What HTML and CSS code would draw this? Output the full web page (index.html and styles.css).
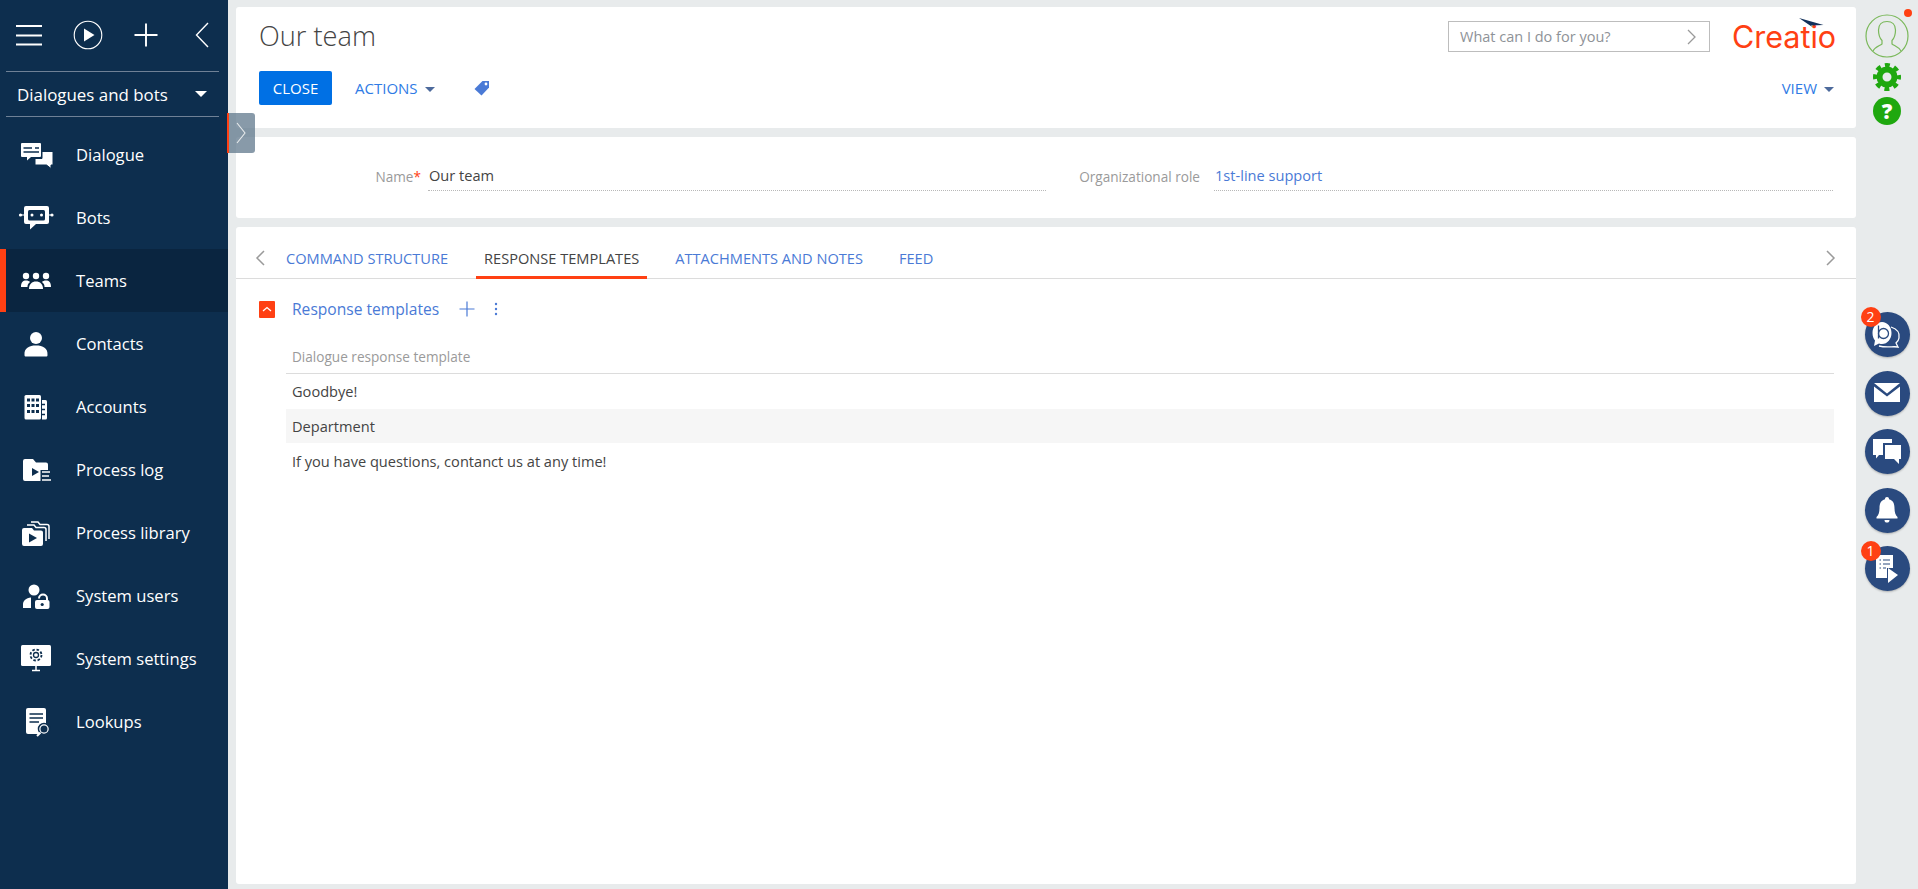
FILE: index.html
```html
<!DOCTYPE html>
<html lang="en">
<head>
<meta charset="utf-8">
<title>Our team</title>
<link rel="stylesheet" href="styles.css">
</head>
<body>
<div class="app">
  <aside class="sidebar">
    <div class="tools">
      <svg class="tool" width="26" height="24" viewBox="0 0 26 24"><path d="M0 3H26M0 12.500H26M0 21.500H26" stroke="#fff" stroke-width="1.800"/></svg>
      <svg class="tool" width="30" height="30" viewBox="0 0 30 30"><circle cx="15" cy="15" r="13.800" fill="none" stroke="#fff" stroke-width="1.100"/><path d="M11 8.500L21.500 15L11 21.500Z" fill="#fff"/></svg>
      <svg class="tool" width="24" height="24" viewBox="0 0 24 24"><path d="M0.500 12H23.500M12 0.500V23.500" stroke="#fff" stroke-width="1.900"/></svg>
      <svg class="tool" width="14" height="26" viewBox="0 0 14 26"><path d="M13 1L1.500 13L13 25" fill="none" stroke="#fff" stroke-width="1.400"/></svg>
    </div>
    <div class="workplace"><span>Dialogues and bots</span><i class="caret caret-white"></i></div>
    <nav class="nav">
      <a class="nav-item">
        <svg class="nav-icon" viewBox="0 0 36 30"><path d="M4 3H22a1 1 0 0 1 1 1V16a1 1 0 0 1-1 1H13L9 20.500V17H4a1 1 0 0 1-1-1V4a1 1 0 0 1 1-1Z" fill="#fff"/><path d="M5.500 8H14M17 8H21M5.500 12H21" stroke="#0d2e4e" stroke-width="1.400"/><path d="M23 11.500H35V25H33V28.500L28.500 25H17V18.500H24V11.500Z" fill="#fff" stroke="#0d2e4e" stroke-width="1"/></svg>
        <span>Dialogue</span></a>
      <a class="nav-item">
        <svg class="nav-icon" viewBox="0 0 36 30"><path d="M8 3H29a2 2 0 0 1 2 2V19a2 2 0 0 1-2 2H18L12 26.500V21H8a2 2 0 0 1-2-2V5a2 2 0 0 1 2-2Z" fill="#fff"/><rect x="10" y="7" width="17" height="10.500" rx="1.500" fill="#0d2e4e"/><circle cx="14" cy="12" r="1.500" fill="#fff"/><circle cx="23.500" cy="12" r="1.500" fill="#fff"/><path d="M2 12H6M31 12H35" stroke="#fff" stroke-width="1.200"/><circle cx="2.500" cy="12" r="1.600" fill="#fff"/><circle cx="34" cy="12" r="1.600" fill="#fff"/></svg>
        <span>Bots</span></a>
      <a class="nav-item active">
        <svg class="nav-icon" viewBox="0 0 36 30"><circle cx="8" cy="10" r="3.200" fill="#fff"/><circle cx="18" cy="10" r="3.200" fill="#fff"/><circle cx="28" cy="10" r="3.200" fill="#fff"/><path d="M3 21C3 16 5 14.500 8 14.500C10 14.500 11 15 12 16C10 17.500 9.500 19 9.500 21ZM33 21C33 16 31 14.500 28 14.500C26 14.500 25 15 24 16C26 17.500 26.500 19 26.500 21Z" fill="#fff"/><path d="M11 23C11 18 14 15.500 18 15.500C22 15.500 25 18 25 23Z" fill="#fff"/></svg>
        <span>Teams</span></a>
      <a class="nav-item">
        <svg class="nav-icon" viewBox="0 0 36 30"><circle cx="18" cy="9" r="6" fill="#fff"/><path d="M6.500 26C6 19 11 16.500 18 16.500C25 16.500 30 19 29.500 26C29.500 27 29 27.500 28 27.500H8C7 27.500 6.500 27 6.500 26Z" fill="#fff"/></svg>
        <span>Contacts</span></a>
      <a class="nav-item">
        <svg class="nav-icon" viewBox="0 0 36 30"><rect x="6.500" y="3" width="16.500" height="24.500" rx="1.500" fill="#fff"/><path d="M9 6.500h3v3h-3zM13.500 6.500h3v3h-3zM18 6.500h3v3h-3zM9 12h3v3h-3zM13.500 12h3v3h-3zM18 12h3v3h-3zM9 18h3v3h-3zM13.500 18h3v3h-3zM18 18h3v3h-3z" fill="#0d2e4e"/><path d="M24 8H27.500a1.500 1.500 0 0 1 1.500 1.500V26a1.500 1.500 0 0 1-1.500 1.500H24Z" fill="#fff"/><path d="M24 12.500H27M24 17.500H27M24 22.500H27" stroke="#0d2e4e" stroke-width="1.300"/></svg>
        <span>Accounts</span></a>
      <a class="nav-item">
        <svg class="nav-icon" viewBox="0 0 36 30"><path d="M7 4H15L18 7.500H28a2 2 0 0 1 2 2V24a2 2 0 0 1-2 2H7a2 2 0 0 1-2-2V6a2 2 0 0 1 2-2Z" fill="#fff"/><path d="M14 13L21 17L14 21Z" fill="#0d2e4e"/><path d="M22.500 17H35M22.500 21H35M22.500 25H35" stroke="#0d2e4e" stroke-width="4"/><path d="M24 17H32M24 21H31M24 25H33" stroke="#fff" stroke-width="1.500"/></svg>
        <span>Process log</span></a>
      <a class="nav-item">
        <svg class="nav-icon" viewBox="0 0 36 30"><path d="M6 10H14L16 12.500H23a2 2 0 0 1 2 2V26a2 2 0 0 1-2 2H6a2 2 0 0 1-2-2V12a2 2 0 0 1 2-2Z" fill="#fff"/><path d="M11 15.500L19 20L11 24.500Z" fill="#0d2e4e"/><path d="M9 7H16L18 9.500H26a2 2 0 0 1 2 2V23M13 4H20L22 6.500H29a2 2 0 0 1 2 2V21" fill="none" stroke="#fff" stroke-width="1.500"/></svg>
        <span>Process library</span></a>
      <a class="nav-item">
        <svg class="nav-icon" viewBox="0 0 36 30"><circle cx="16" cy="9" r="5.500" fill="#fff"/><path d="M5 27V23C5 20 8 17 13 16.500L13 27Z" fill="#fff"/><path d="M21 17.500a4 4 0 0 1 8 0V19" fill="none" stroke="#fff" stroke-width="2"/><rect x="17" y="19" width="14.500" height="9" rx="2" fill="#fff"/><circle cx="24.200" cy="23.500" r="1.600" fill="#0d2e4e"/></svg>
        <span>System users</span></a>
      <a class="nav-item">
        <svg class="nav-icon" viewBox="0 0 36 30"><rect x="3" y="1" width="30" height="21" rx="1.500" fill="#fff"/><path d="M14 26.500H22M18 22V26.500" stroke="#fff" stroke-width="1.500"/><circle cx="18" cy="11" r="2.500" fill="none" stroke="#0d2e4e" stroke-width="1.300"/><circle cx="18" cy="11" r="5.500" fill="none" stroke="#0d2e4e" stroke-width="1.800" stroke-dasharray="2.500 1.800"/></svg>
        <span>System settings</span></a>
      <a class="nav-item">
        <svg class="nav-icon" viewBox="0 0 36 30"><path d="M10 1H26a2 2 0 0 1 2 2V25a2 2 0 0 1-2 2H10a2 2 0 0 1-2-2V3a2 2 0 0 1 2-2Z" fill="#fff"/><path d="M11.500 7H25M11.500 11H25M11.500 15H21" stroke="#0d2e4e" stroke-width="1.700"/><circle cx="26" cy="22" r="5.500" fill="#fff" stroke="#0d2e4e" stroke-width="1.500"/><circle cx="26" cy="22" r="3.500" fill="#0d2e4e"/><path d="M22.500 25.500L19 29" stroke="#fff" stroke-width="2"/></svg>
        <span>Lookups</span></a>
    </nav>
    <button class="toggle"><svg width="10" height="22" viewBox="0 0 10 22"><path d="M1 1L9 11L1 21" fill="none" stroke="#e8ebec" stroke-width="1.100"/></svg></button>
  </aside>

  <main class="content">
    <section class="panel head">
      <div class="head-top">
        <h1 class="title">Our team</h1>
        <div class="search"><span>What can I do for you?</span><svg width="9" height="16" viewBox="0 0 9 16"><path d="M1 1L8 8L1 15" fill="none" stroke="#9a9a9a" stroke-width="1.300"/></svg></div>
        <div class="logo"><svg class="logo-arrow" width="25" height="10" viewBox="0 0 25 10"><path d="M0 0L24.500 7L12 7.500L14 9.500Z" fill="#12305a"/></svg><span>Creatio</span></div>
      </div>
      <div class="head-actions">
        <button class="btn-close">CLOSE</button>
        <a class="action">ACTIONS<i class="caret caret-blue"></i></a>
        <svg class="tag" width="16" height="16" viewBox="0 0 16 16"><path d="M8.500 1H15V7.500L7.500 15.500L0.500 9Z" fill="#4a7ad6"/><circle cx="12" cy="4" r="1.400" fill="#fff"/></svg>
        <a class="action view">VIEW<i class="caret caret-blue"></i></a>
      </div>
    </section>

    <section class="panel form">
      <div class="field">
        <label class="field-label">Name<em>*</em></label>
        <div class="field-value">Our team</div>
      </div>
      <div class="field">
        <label class="field-label">Organizational role</label>
        <div class="field-value link">1st-line support</div>
      </div>
    </section>

    <section class="panel detail">
      <div class="tabs">
        <svg class="tab-arrow" width="10" height="16" viewBox="0 0 10 16"><path d="M9 1L2 8L9 15" fill="none" stroke="#9a9a9a" stroke-width="1.500"/></svg>
        <a class="tab">COMMAND STRUCTURE</a>
        <a class="tab selected">RESPONSE TEMPLATES</a>
        <a class="tab">ATTACHMENTS AND NOTES</a>
        <a class="tab">FEED</a>
        <svg class="tab-arrow right" width="10" height="16" viewBox="0 0 10 16"><path d="M1 1L8 8L1 15" fill="none" stroke="#9a9a9a" stroke-width="1.500"/></svg>
      </div>
      <div class="group">
        <span class="collapse"><svg width="10" height="6" viewBox="0 0 10 6"><path d="M1 5L5 1.500L9 5" fill="none" stroke="#fff" stroke-width="1.300"/></svg></span>
        <span class="group-title">Response templates</span>
        <svg class="group-add" width="16" height="16" viewBox="0 0 16 16"><path d="M0.500 8H15.500M8 0.500V15.500" stroke="#4a7ad6" stroke-width="1.200"/></svg>
        <svg class="group-more" width="4" height="14" viewBox="0 0 4 14"><circle cx="2" cy="2" r="1.200" fill="#4a7ad6"/><circle cx="2" cy="7" r="1.200" fill="#4a7ad6"/><circle cx="2" cy="12" r="1.200" fill="#4a7ad6"/></svg>
      </div>
      <div class="grid">
        <div class="grid-head">Dialogue response template</div>
        <div class="grid-row">Goodbye!</div>
        <div class="grid-row alt">Department</div>
        <div class="grid-row">If you have questions, contanct us at any time!</div>
      </div>
    </section>
  </main>

  <aside class="rail">
    <div class="rail-top">
      <span class="avatar">
        <svg width="44" height="44" viewBox="0 0 44 44"><circle cx="22" cy="22" r="21" fill="none" stroke="#7ab85a" stroke-width="1.200"/><path d="M8 37C10 33 14 32 17 30V26.500C14.500 24 13.500 20 13.500 16C13.500 10.500 17 7.500 22 7.500C27 7.500 30.500 10.500 30.500 16C30.500 20 29.500 24 27 26.500V30C30 32 34 33 36 37" fill="none" stroke="#7ab85a" stroke-width="1.200"/></svg>
        <i class="avatar-dot"></i>
      </span>
      <svg class="gear" width="28" height="28" viewBox="0 0 28 28"><circle cx="14" cy="14" r="7.500" fill="none" stroke="#1fa80f" stroke-width="6"/><circle cx="14" cy="14" r="12" fill="none" stroke="#1fa80f" stroke-width="4" stroke-dasharray="5 4.425" stroke-dashoffset="2.500"/></svg>
      <span class="help">?</span>
    </div>
    <div class="comm">
      <span class="comm-btn"><svg width="30" height="30" viewBox="0 0 30 30"><path d="M10 2C15.500 2 19.500 7 19.500 13C19.500 19 15.500 24 10 24C9 24 8 24 7 23.500L2 26L3 20.500C1.500 18.500 0.500 16 0.500 13C0.500 7 4.500 2 10 2Z" fill="#fff"/><path d="M6.500 5.500V18.500" stroke="#2a4a7f" stroke-width="1.300"/><circle cx="11.500" cy="13.500" r="5" fill="none" stroke="#2a4a7f" stroke-width="1.300"/><path d="M19 7C25 9 28 13 27 18C26.500 21 25 22 24 23L26 27C21 26 15 28 7 26" fill="none" stroke="#fff" stroke-width="1.300"/></svg><b class="badge">2</b></span>
      <span class="comm-btn"><svg width="26" height="20" viewBox="0 0 26 20"><path d="M0 0H26L13 10.500Z" fill="#fff"/><path d="M0 3.500L13 13.500L26 3.500V19H0Z" fill="#fff"/></svg></span>
      <span class="comm-btn"><svg width="28" height="26" viewBox="0 0 28 26"><path d="M0 0H19V4H10V16H6L3 19.500V16H0Z" fill="#fff"/><path d="M12 6H28V20H26V25L21 20H12Z" fill="#fff"/></svg></span>
      <span class="comm-btn"><svg width="22" height="26" viewBox="0 0 22 26"><path d="M11 0a2 2 0 0 1 2 2.200C17 3.200 18.500 6.500 18.500 11C18.500 15.500 19.500 18 21.500 20V21.500H.5V20C2.500 18 3.500 15.500 3.500 11C3.500 6.500 5 3.200 9 2.200A2 2 0 0 1 11 0ZM8.500 23H13.500C13.500 25 12.500 25.500 11 25.500S8.500 25 8.500 23Z" fill="#fff"/></svg></span>
      <span class="comm-btn"><svg width="22" height="28" viewBox="0 0 22 28"><path d="M0 0H17V13H11V23H0Z" fill="#fff"/><path d="M3.500 5H5M7 5H14M3.500 9H5M7 9H14M3.500 13H5M7 13H10" stroke="#2a4a7f" stroke-width="1.200"/><path d="M12 13L22 20L12 28Z" fill="#fff"/></svg><b class="badge">1</b></span>
    </div>
  </aside>
</div>
</body>
</html>
```

FILE: styles.css
```css
* { box-sizing: border-box; }
html, body { margin: 0; height: 100%; overflow: hidden; }
body { font-family: "Open Sans", sans-serif; background: #e8ebec; color: #444; font-size: 14.600px; }
svg { display: block; flex: none; }
a { cursor: pointer; }

.app { display: flex; width: 1918px; height: 889px; }

.sidebar { position: relative; width: 228px; flex: none; background: #0d2e4e; color: #fff; }
.tools { display: flex; align-items: center; height: 71px; padding: 0 20px 1px 16px; }
.tools .tool:nth-child(1) { margin-right: 31px; }
.tools .tool:nth-child(2) { margin-right: 31px; }
.tools .tool:nth-child(3) { margin-right: 37px; }
.workplace { display: flex; align-items: center; justify-content: space-between; height: 46px; margin: 0 9px 0 6px; padding: 0 12px 0 11px; border-top: 1px solid #6f8196; border-bottom: 1px solid #6f8196; font-size: 16.900px; }
.caret { display: inline-block; width: 0; height: 0; border-left: 5px solid transparent; border-right: 5px solid transparent; }
.caret-white { border-top: 6px solid #fff; border-left-width: 6px; border-right-width: 6px; }
.caret-blue { border-top: 5px solid #4d6a9c; margin-left: 7px; vertical-align: 2px; }
.nav { display: flex; flex-direction: column; margin-top: 6px; }
.nav-item { display: flex; align-items: center; height: 63px; padding-left: 18px; font-size: 16.600px; color: #fff; }
.nav-item.active { background: #0a2540; box-shadow: inset 6px 0 0 #ff4013; }
.nav-icon { width: 36px; height: 30px; margin-right: 22px; }
.toggle { position: absolute; left: 227px; top: 113px; width: 28px; height: 40px; padding: 0 0 0 7px; border: 0; border-left: 2px solid #ff4013; border-radius: 0 3px 3px 0; background: rgba(96, 120, 140, 0.75); z-index: 2; }

.content { flex: none; width: 1620px; margin-left: 8px; padding-top: 7px; display: flex; flex-direction: column; gap: 9px; height: 889px; padding-bottom: 5px; }
.panel { background: #fff; border-radius: 3px; }

.head { height: 121px; padding: 0 20px 0 23px; }
.head-top { display: flex; align-items: center; height: 64px; }
.title { margin: 0 auto 0 0; font-weight: 300; font-size: 27.200px; color: #444; position: relative; top: -4px; }
.search { display: flex; align-items: center; justify-content: space-between; width: 262px; height: 31px; padding: 0 13px 0 11px; border: 1px solid #bdbdbd; color: #8e9297; font-size: 14.500px; margin-top: -5px; }
.logo { position: relative; width: 104px; margin-left: 22px; color: #ff4013; font-family: "Inter", sans-serif; font-weight: 400; font-size: 30.500px; line-height: 34px; margin-top: -4px; white-space: nowrap; }
.logo-arrow { position: absolute; left: 67px; top: -2px; }
.head-actions { display: flex; align-items: center; }
.btn-close { width: 73px; height: 34px; border: 0; border-radius: 2px; background: #0070e4; color: #fff; font: 15px "Open Sans", sans-serif; }
.action { color: #2f7be5; font-size: 15px; }
.head-actions .action:nth-child(2) { margin-left: 23px; }
.tag { margin-left: 39px; }
.view { margin-left: auto; margin-right: 2px; }

.form { height: 81px; display: flex; padding: 25px 23px 0 0; }
.field { display: flex; height: 29px; }
.field:first-child { flex: none; width: 810px; }
.field:last-child { flex: 1; }
.field-label { width: 192px; text-align: right; padding-right: 7px; color: #9a9a9a; font-size: 13.600px; line-height: 30px; flex: none; }
.field-label em { color: #ff4013; font-style: normal; }
.field:last-child .field-label { width: 168px; padding-right: 14px; }
.field-value { flex: 1; padding-left: 1px; font-size: 14.600px; line-height: 26px; border-bottom: 1px dotted #b8b8b8; color: #444; }
.link { color: #4a7ad6; }

.detail { flex: 1; }
.tabs { display: flex; align-items: center; height: 52px; padding: 0 20px 0 19px; border-bottom: 1px solid #dcdcdc; }
.tab-arrow { align-self: flex-start; margin: 23px 13px 0 0; }
.tab-arrow.right { margin: 23px 0 0 auto; }
.tab { align-self: flex-start; height: 52px; padding: 17.500px 8px 0; margin-right: 20px; line-height: 26px; font-size: 14.600px; color: #4a7ad6; }
.tab.selected { color: #444; border-bottom: 3px solid #ff4013; }
.group { display: flex; align-items: center; height: 18px; margin: 21px 0 0 23px; }
.collapse { display: flex; align-items: center; justify-content: center; width: 16px; height: 17px; background: #ff4013; border-radius: 1px; margin-right: 17px; }
.group-title { font-size: 15.600px; color: #4a7ad6; margin-right: 20px; }
.group-add { margin-right: 19px; }
.grid { margin: 0 22px 0 50px; padding-top: 23px; }
.grid-head { height: 33px; line-height: 32px; padding-left: 6px; color: #9a9a9a; font-size: 13.600px; border-bottom: 1px solid #dcdcdc; }
.grid-row { height: 35px; line-height: 35px; padding-left: 6px; font-size: 14.600px; color: #444; }
.grid-row.alt { background: #f6f6f6; height: 34px; line-height: 35px; }
.grid-row.alt + .grid-row { line-height: 37px; }

.rail { flex: 1; position: relative; }
.rail-top { display: flex; flex-direction: column; align-items: center; padding-top: 14px; }
.avatar { position: relative; display: block; }
.avatar-dot { position: absolute; right: -3px; top: -5px; width: 8px; height: 8px; border-radius: 50%; background: #ff4013; }
.gear { margin-top: 5px; }
.help { width: 28px; height: 28px; margin-top: 6px; border-radius: 50%; background: #1fa80f; color: #fff; font: 800 21px/28px "Open Sans", sans-serif; text-align: center; }
.comm { display: flex; flex-direction: column; align-items: center; gap: 13.500px; margin-top: 187px; }
.comm-btn { position: relative; display: flex; align-items: center; justify-content: center; width: 45px; height: 45px; border-radius: 50%; background: #2a4a7f; box-shadow: 0 1px 2px rgba(0,0,0,.25); }
.badge { position: absolute; left: -4px; top: -5px; width: 20px; height: 20px; border-radius: 50%; background: #ff4013; color: #fff; font: 14px/20px "Open Sans", sans-serif; text-align: center; }
```
